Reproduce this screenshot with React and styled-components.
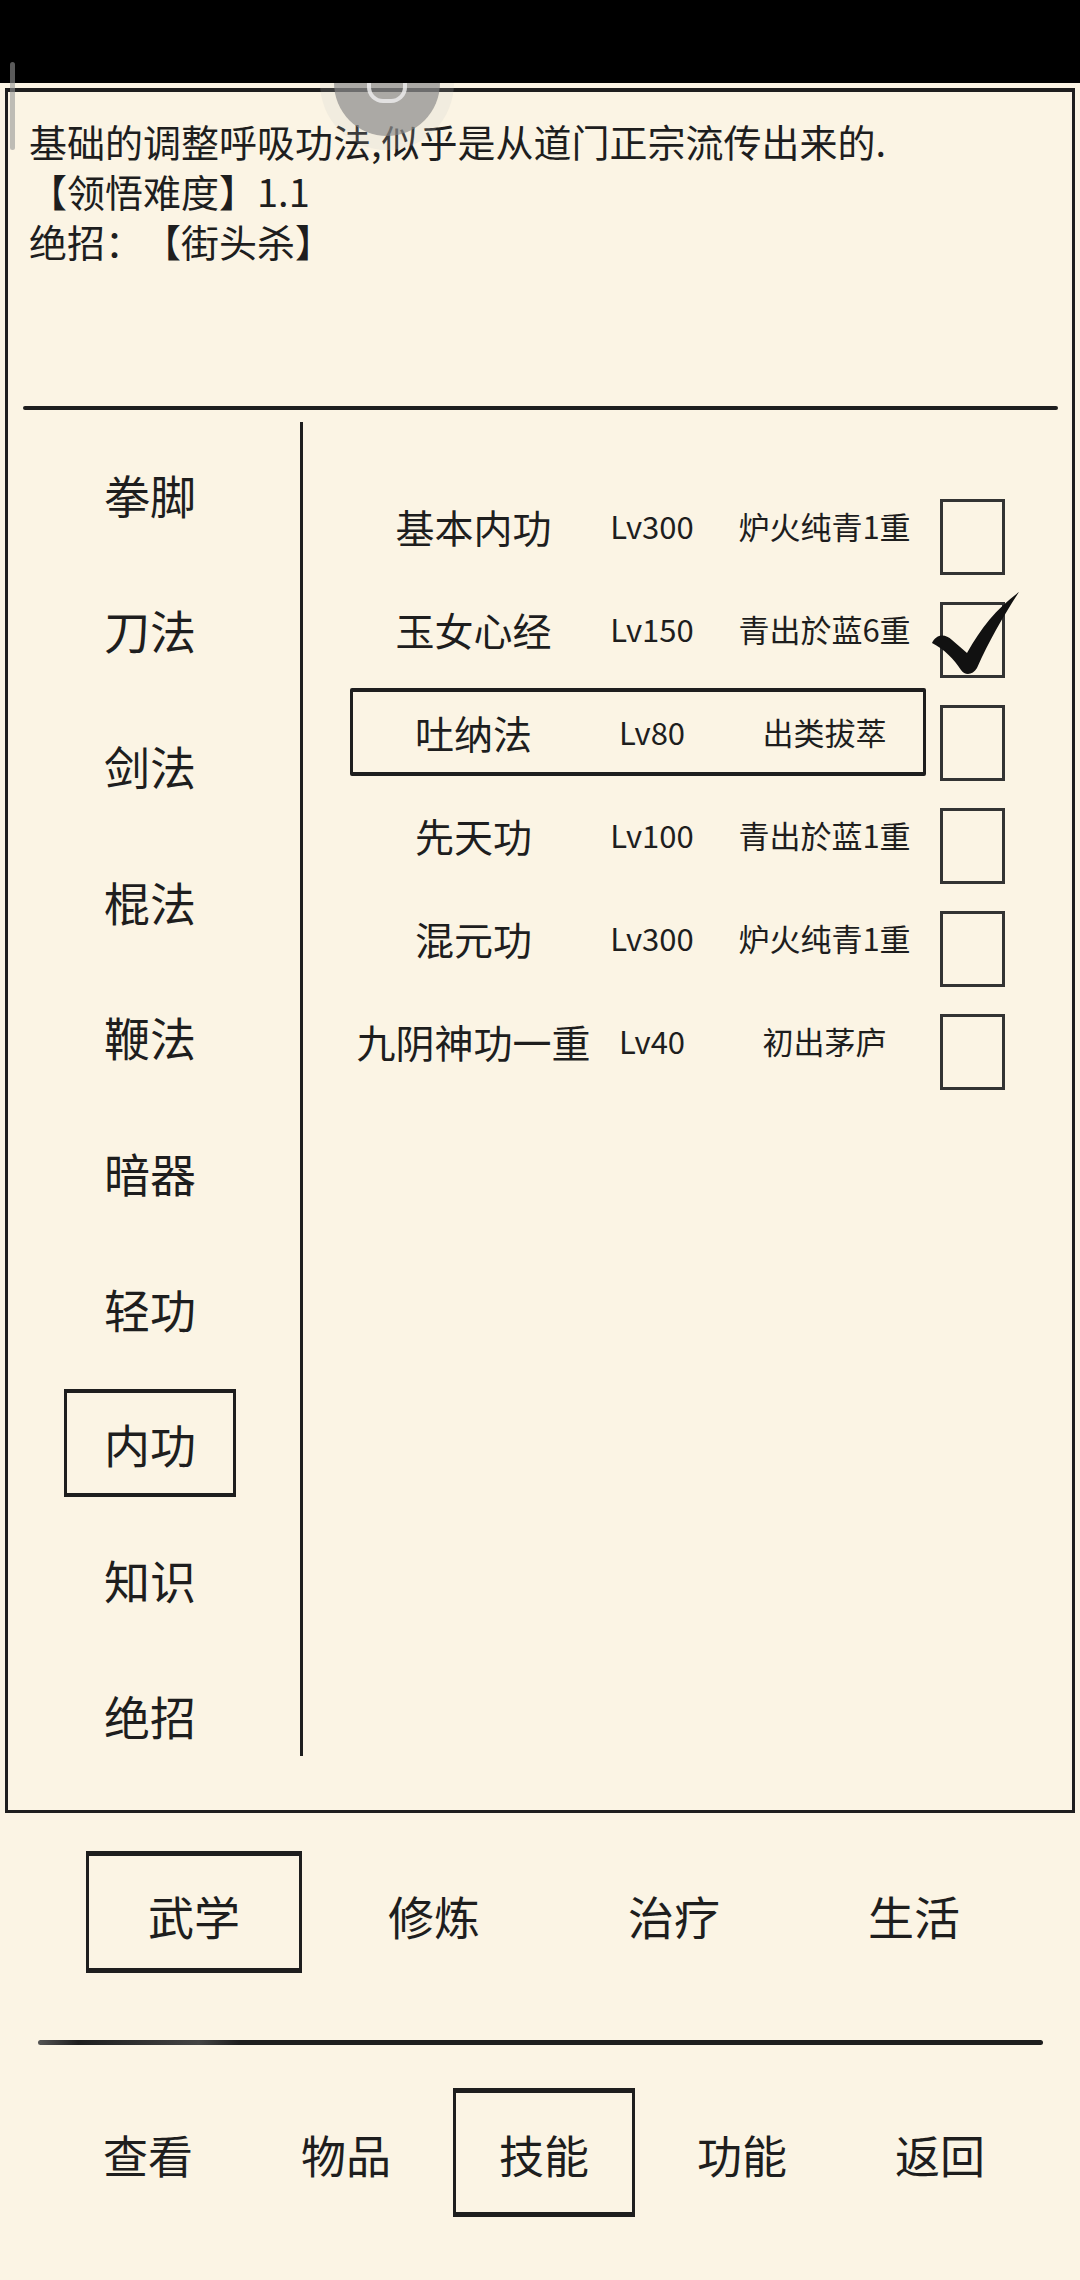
import React from "react";
import styled, { createGlobalStyle } from "styled-components";

const paper = "#FBF4E4";
const ink = "#1E1E1E";
const font = `"Noto Sans CJK SC", "Noto Sans", sans-serif`;

const GlobalStyle = createGlobalStyle`
  html, body {
    margin: 0;
    padding: 0;
    background: ${paper};
  }
  body {
    font-family: ${font};
    color: ${ink};
    text-spacing-trim: space-all;
  }
  * {
    box-sizing: border-box;
  }
`;

const Page = styled.div`
  position: relative;
  width: 1080px;
  height: 2280px;
  background: ${paper};
  overflow: hidden;
`;

const StatusBar = styled.div`
  height: 83px;
  background: #000;
`;

const EdgeHandle = styled.div`
  position: absolute;
  left: 10px;
  top: 62px;
  width: 5px;
  height: 88px;
  border-radius: 3px;
  background: rgba(150, 150, 150, 0.6);
  z-index: 5;
`;

const Screen = styled.div`
  position: relative;
  overflow: hidden;
  display: flex;
  flex-direction: column;
  height: 2197px;
`;

const FloatBall = styled.div`
  position: absolute;
  left: 334px;
  top: -53px;
  width: 106px;
  height: 106px;
  border-radius: 50%;
  background: rgba(140, 140, 140, 0.72);
  box-shadow: 0 0 0 14px rgba(200, 200, 200, 0.18);
  z-index: 4;
`;

const BallGlyph = styled.div`
  position: absolute;
  left: 33px;
  bottom: 33px;
  width: 40px;
  height: 46px;
  border: 4px solid rgba(235, 235, 235, 0.85);
  border-top: none;
  border-radius: 0 0 16px 16px;
`;

const Frame = styled.div`
  margin: 5px 0 0 5px;
  width: 1070px;
  height: 1725px;
  border: 3px solid ${ink};
  border-top-width: 4px;
  display: flex;
  flex-direction: column;
`;

const Description = styled.div`
  height: 314px;
  padding: 24px 21px 0;
  font-size: 38px;
  line-height: 50px;
`;

const DescLine = styled.div`
  white-space: nowrap;
`;

const HRule = styled.div`
  height: 4px;
  margin: 0 14px 0 15px;
  border-radius: 2px;
  background: ${ink};
`;

const Body = styled.div`
  flex: 1;
  display: flex;
`;

const NavColumn = styled.div`
  width: 292px;
  padding: 16px 8px 0 0;
  display: flex;
  flex-direction: column;
`;

const NavItem = styled.div`
  height: 135.67px;
  display: flex;
  align-items: center;
  justify-content: center;
`;

const NavLabel = styled.div`
  width: 172px;
  height: 108px;
  display: flex;
  align-items: center;
  justify-content: center;
  font-size: 46px;
  border: 3px solid ${(p) => (p.$active ? ink : "transparent")};
  border-top-width: 4px;
  border-bottom-width: 4px;
`;

const VRule = styled.div`
  width: 3px;
  margin: 12px 0 54px;
  background: ${ink};
`;

const SkillList = styled.div`
  flex: 1;
  padding: 64px 0 0 47px;
  display: flex;
  flex-direction: column;
`;

const SkillRow = styled.div`
  height: 103px;
  display: flex;
  align-items: center;
`;

const SkillCard = styled.div`
  width: 576px;
  height: 88px;
  display: grid;
  grid-template-columns: 241px 116px 1fr;
  align-items: center;
  border: 3px solid ${(p) => (p.$selected ? ink : "transparent")};
  border-top-width: 4px;
  border-bottom-width: 4px;
  border-radius: 2px;
`;

const SkillName = styled.div`
  text-align: center;
  font-size: 39px;
  white-space: nowrap;
`;

const SkillLevel = styled.div`
  text-align: center;
  font-size: 31px;
  white-space: nowrap;
`;

const SkillRank = styled.div`
  text-align: center;
  font-size: 31px;
  padding-left: 16px;
  white-space: nowrap;
`;

const CheckBox = styled.div`
  position: relative;
  width: 65px;
  height: 76px;
  margin: 22px 0 0 14px;
  border: 3px solid #333;
`;

const CheckMark = styled.svg`
  position: absolute;
  left: -12px;
  top: -14px;
  width: 90px;
  height: 84px;
`;

const TabRow = styled.div`
  margin: 38px 0 0 74px;
  display: grid;
  grid-template-columns: repeat(4, 240px);
`;

const Tab = styled.div`
  display: flex;
  justify-content: center;
`;

const TabLabel = styled.div`
  width: 216px;
  height: 122px;
  display: flex;
  align-items: center;
  justify-content: center;
  padding-top: 6px;
  font-size: 46px;
  border: 3px solid ${(p) => (p.$active ? ink : "transparent")};
  border-top-width: 5px;
  border-bottom-width: 5px;
`;

const BrushRule = styled.div`
  height: 5px;
  margin: 67px 37px 0 38px;
  border-radius: 3px;
  background: linear-gradient(
    to right,
    #555 0%,
    ${ink} 4%,
    #444 16%,
    ${ink} 20%,
    ${ink} 100%
  );
`;

const BottomNav = styled.div`
  margin: 43px 0 0 49px;
  display: grid;
  grid-template-columns: repeat(5, 198px);
`;

const NavButton = styled.div`
  display: flex;
  justify-content: center;
`;

const NavButtonLabel = styled.div`
  width: 182px;
  height: 129px;
  display: flex;
  align-items: center;
  justify-content: center;
  padding-top: 4px;
  font-size: 45px;
  border: 3px solid ${(p) => (p.$active ? ink : "transparent")};
  border-top-width: 5px;
  border-bottom-width: 5px;
`;

const categories = ["拳脚", "刀法", "剑法", "棍法", "鞭法", "暗器", "轻功", "内功", "知识", "绝招"];

const skills = [
  { name: "基本内功", level: "Lv300", rank: "炉火纯青1重", checked: false },
  { name: "玉女心经", level: "Lv150", rank: "青出於蓝6重", checked: true },
  { name: "吐纳法", level: "Lv80", rank: "出类拔萃", checked: false, selected: true },
  { name: "先天功", level: "Lv100", rank: "青出於蓝1重", checked: false },
  { name: "混元功", level: "Lv300", rank: "炉火纯青1重", checked: false },
  { name: "九阴神功一重", level: "Lv40", rank: "初出茅庐", checked: false },
];

const tabs = ["武学", "修炼", "治疗", "生活"];
const menu = ["查看", "物品", "技能", "功能", "返回"];

const Tick = () => (
  <CheckMark viewBox="0 0 90 84">
    <path
      d="M1 52 C5 43 14 42 21 49 L36 62 C50 37 66 17 88 1 C73 24 58 50 46 77 C42 84 34 85 30 79 C23 68 13 58 1 52 Z"
      fill="#111"
    />
  </CheckMark>
);

export default function App() {
  return (
    <Page>
      <GlobalStyle />
      <StatusBar />
      <EdgeHandle />
      <Screen>
        <FloatBall>
          <BallGlyph />
        </FloatBall>
        <Frame>
          <Description>
            <DescLine>基础的调整呼吸功法,似乎是从道门正宗流传出来的.</DescLine>
            <DescLine>【领悟难度】1.1</DescLine>
            <DescLine>绝招：【街头杀】</DescLine>
          </Description>
          <HRule />
          <Body>
            <NavColumn>
              {categories.map((c) => (
                <NavItem key={c}>
                  <NavLabel $active={c === "内功"}>{c}</NavLabel>
                </NavItem>
              ))}
            </NavColumn>
            <VRule />
            <SkillList>
              {skills.map((s) => (
                <SkillRow key={s.name}>
                  <SkillCard $selected={s.selected}>
                    <SkillName>{s.name}</SkillName>
                    <SkillLevel>{s.level}</SkillLevel>
                    <SkillRank>{s.rank}</SkillRank>
                  </SkillCard>
                  <CheckBox>{s.checked && <Tick />}</CheckBox>
                </SkillRow>
              ))}
            </SkillList>
          </Body>
        </Frame>
        <TabRow>
          {tabs.map((t, i) => (
            <Tab key={t}>
              <TabLabel $active={i === 0}>{t}</TabLabel>
            </Tab>
          ))}
        </TabRow>
        <BrushRule />
        <BottomNav>
          {menu.map((m) => (
            <NavButton key={m}>
              <NavButtonLabel $active={m === "技能"}>{m}</NavButtonLabel>
            </NavButton>
          ))}
        </BottomNav>
      </Screen>
    </Page>
  );
}
